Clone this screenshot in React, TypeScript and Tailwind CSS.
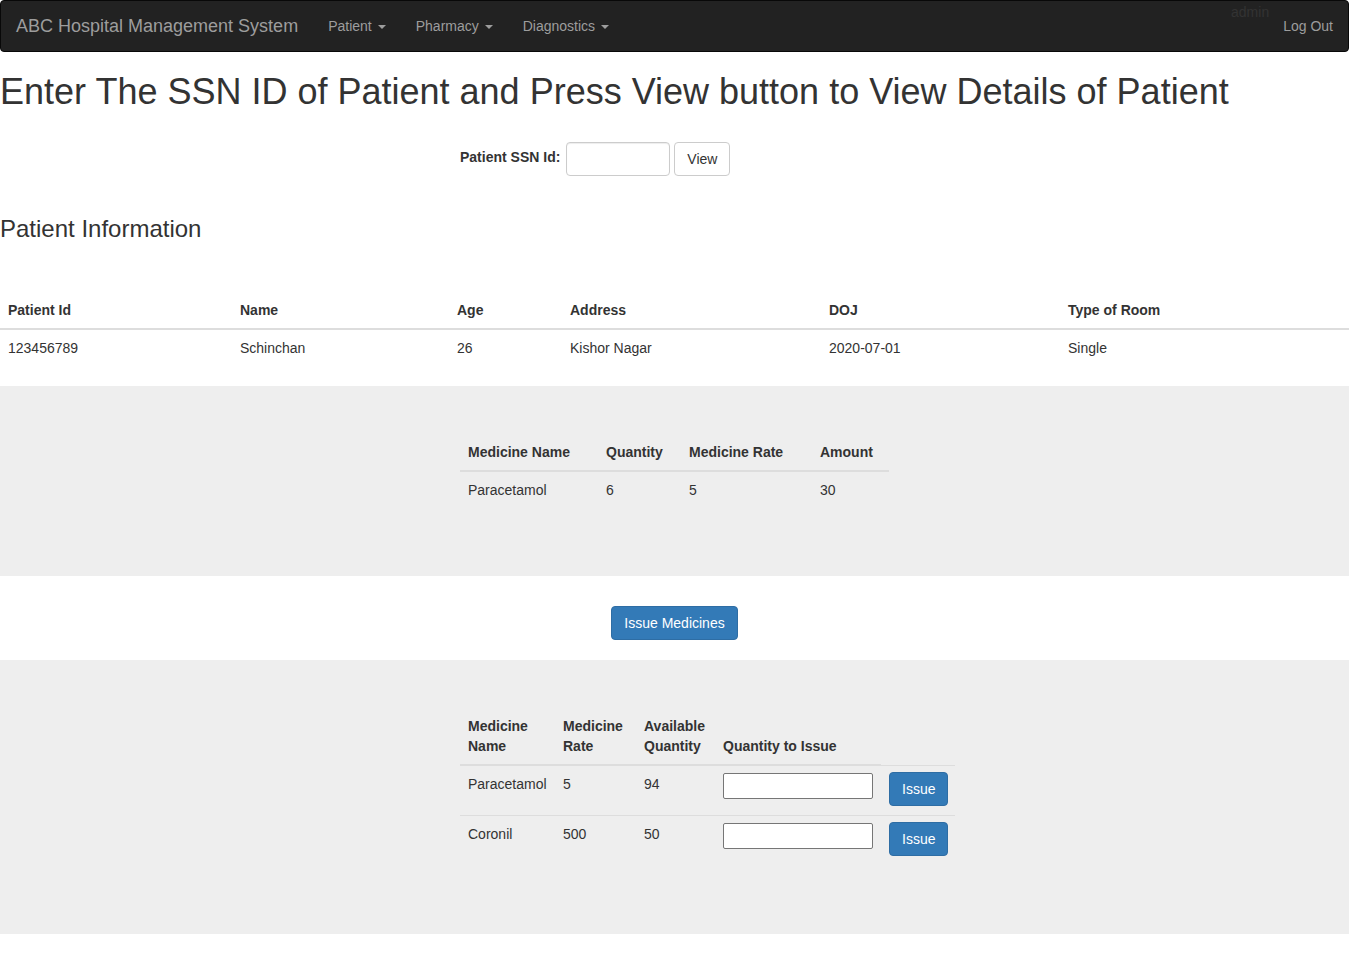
import React from "react"

const font = { fontFamily: '"Liberation Sans", Arial, Helvetica, sans-serif' }

function Caret() {
    return <span className="inline-block ml-[6px] align-middle w-0 h-0 border-t-[4px] border-t-[#9d9d9d] border-x-[4px] border-x-transparent" />
}

function NavBar() {
    return (
        <nav className="flex items-center h-[52px] bg-[#222] border border-[#080808] rounded-[4px]">
            <span className="px-[15px] text-[18px] leading-[20px] text-[#9d9d9d]">ABC Hospital Management System</span>
            <ul className="flex">
                {["Patient", "Pharmacy", "Diagnostics"].map(item => (
                    <li key={item} className="px-[15px] py-[15px] text-[14px] leading-[20px] text-[#9d9d9d]">
                        {item}<Caret />
                    </li>
                ))}
            </ul>
            <div className="ml-auto flex items-start h-full">
                <span className="pt-[1px] text-[14px] leading-[20px] text-[#333]">admin</span>
                <span className="pl-[14px] pr-[15px] pt-[15px] text-[14px] leading-[20px] text-[#9d9d9d]">Log Out</span>
            </div>
        </nav>
    )
}

export default function App() {
    // patient data shown after pressing View
    const patient = { id: "123456789", name: "Schinchan", age: 26, address: "Kishor Nagar", doj: "2020-07-01", room: "Single" }
    const issued = [{ name: "Paracetamol", qty: 6, rate: 5, amount: 30 }]
    const stock = [
        { name: "Paracetamol", rate: 5, available: 94 },
        { name: "Coronil", rate: 500, available: 50 },
    ]

    return (
        <div className="w-[1349px] bg-white text-[14px] leading-[20px] text-[#333]" style={font}>
            <NavBar />

            <h1 className="mt-[20px] mb-[10px] text-[36px] leading-[39.6px] font-medium">
                Enter The SSN ID of Patient and Press View button to View Details of Patient
            </h1>

            {/* SSN form */}
            <div className="ml-[460px] mt-[30px] flex items-center gap-[4px]">
                <label className="font-bold pb-[3px] pr-[2px]">Patient SSN Id:</label>
                <input className="w-[104px] h-[34px] border border-[#ccc] rounded-[4px] px-[12px] shadow-[inset_0_1px_1px_rgba(0,0,0,0.075)] outline-none" />
                <button className="h-[34px] px-[12px] border border-[#ccc] rounded-[4px] bg-white text-[#333]">View</button>
            </div>

            <h3 className="mt-[40px] text-[24px] leading-[26.4px] font-medium">Patient Information</h3>

            <table className="mt-[50px] mb-[20px] w-full border-collapse text-left">
                <thead>
                    <tr>
                        <th className="w-[232px] p-[8px] font-bold border-b-2 border-[#ddd]">Patient Id</th>
                        <th className="w-[217px] p-[8px] font-bold border-b-2 border-[#ddd]">Name</th>
                        <th className="w-[113px] p-[8px] font-bold border-b-2 border-[#ddd]">Age</th>
                        <th className="w-[259px] p-[8px] font-bold border-b-2 border-[#ddd]">Address</th>
                        <th className="w-[239px] p-[8px] font-bold border-b-2 border-[#ddd]">DOJ</th>
                        <th className="p-[8px] font-bold border-b-2 border-[#ddd]">Type of Room</th>
                    </tr>
                </thead>
                <tbody>
                    <tr>
                        <td className="p-[8px]">{patient.id}</td>
                        <td className="p-[8px]">{patient.name}</td>
                        <td className="p-[8px]">{patient.age}</td>
                        <td className="p-[8px]">{patient.address}</td>
                        <td className="p-[8px]">{patient.doj}</td>
                        <td className="p-[8px]">{patient.room}</td>
                    </tr>
                </tbody>
            </table>

            {/* Issued medicines */}
            <div className="bg-[#eee] pt-[48px] pb-[48px]">
                <table className="ml-[460px] w-[429px] mb-[20px] table-fixed border-collapse text-left">
                    <thead>
                        <tr>
                            <th className="w-[138px] p-[8px] font-bold border-b-2 border-[#ddd]">Medicine Name</th>
                            <th className="w-[83px] p-[8px] font-bold border-b-2 border-[#ddd]">Quantity</th>
                            <th className="w-[131px] p-[8px] font-bold border-b-2 border-[#ddd]">Medicine Rate</th>
                            <th className="w-[77px] p-[8px] font-bold border-b-2 border-[#ddd]">Amount</th>
                        </tr>
                    </thead>
                    <tbody>
                        {issued.map(m => (
                            <tr key={m.name}>
                                <td className="p-[8px]">{m.name}</td>
                                <td className="p-[8px]">{m.qty}</td>
                                <td className="p-[8px]">{m.rate}</td>
                                <td className="p-[8px]">{m.amount}</td>
                            </tr>
                        ))}
                    </tbody>
                </table>
            </div>

            <div className="flex justify-center pt-[30px] pb-[20px]">
                <button className="h-[34px] px-[12px] rounded-[4px] bg-[#337ab7] border border-[#2e6da4] text-white">Issue Medicines</button>
            </div>

            {/* Stock / issue */}
            <div className="bg-[#eee] pt-[48px] pb-[49px]">
                <table className="ml-[460px] w-[495px] mb-[20px] table-fixed border-collapse text-left">
                    <thead>
                        <tr>
                            <th className="w-[95px] p-[8px] font-bold align-bottom border-b-2 border-[#ddd]">Medicine<br />Name</th>
                            <th className="w-[81px] p-[8px] font-bold align-bottom border-b-2 border-[#ddd]">Medicine<br />Rate</th>
                            <th className="w-[79px] p-[8px] font-bold align-bottom border-b-2 border-[#ddd]">Available<br />Quantity</th>
                            <th className="w-[166px] p-[8px] font-bold align-bottom border-b-2 border-[#ddd]">Quantity to Issue</th>
                            <th className="w-[74px] p-0" />
                        </tr>
                    </thead>
                    <tbody>
                        {stock.map(m => (
                            <tr key={m.name}>
                                <td className="p-[8px] align-top border-t border-[#ddd]">{m.name}</td>
                                <td className="p-[8px] align-top border-t border-[#ddd]">{m.rate}</td>
                                <td className="p-[8px] align-top border-t border-[#ddd]">{m.available}</td>
                                <td className="px-[8px] pt-[7px] pb-[8px] align-top border-t border-[#ddd]">
                                    <input className="block w-[150px] h-[26px] bg-white border border-[#767676] rounded-[2px] outline-none" />
                                </td>
                                <td className="px-[8px] pt-[6px] pb-[9px] align-top border-t border-[#ddd]">
                                    <button className="h-[34px] px-[12px] rounded-[4px] bg-[#337ab7] border border-[#2e6da4] text-white">Issue</button>
                                </td>
                            </tr>
                        ))}
                    </tbody>
                </table>
            </div>
        </div>
    )
}
